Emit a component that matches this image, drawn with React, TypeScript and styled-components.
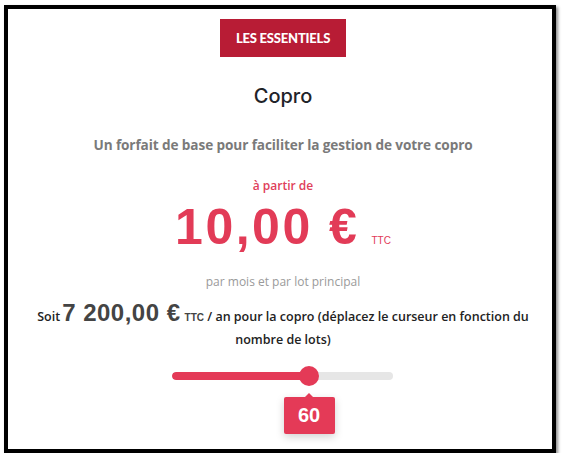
import React from "react";
import styled, { createGlobalStyle } from "styled-components";

const Global = createGlobalStyle`
  html, body { margin: 0; padding: 0; background: #fff; }
  body { font-family: "Open Sans", "Noto Sans", sans-serif; }
`;

const Frame = styled.div`
  box-sizing: border-box;
  margin: 5px 0 0 4px;
  width: 552px;
  height: 448px;
  border: 4px solid #000;
  box-shadow: 2px 2px 3px rgba(0, 0, 0, 0.45);
  display: flex;
  flex-direction: column;
  align-items: center;
  padding-top: 10px;
  padding-left: 6px;
`;

const Badge = styled.div`
  background: #b81c35;
  color: #fff;
  font-family: "Lato", sans-serif;
  font-weight: 900;
  font-size: 13px;
  letter-spacing: -0.2px;
  width: 126px;
  height: 38px;
  display: flex;
  align-items: center;
  justify-content: center;
`;

const Title = styled.h2`
  margin: 27px 0 0;
  font-family: "Inter", sans-serif;
  font-weight: 500;
  font-size: 20px;
  line-height: 24px;
  color: #1f2329;
`;

const Description = styled.p`
  margin: 27px 0 0;
  font-family: "Open Sans", sans-serif;
  font-weight: 700;
  font-size: 13.6px;
  line-height: 20px;
  color: #7a7a7a;
  letter-spacing: -0.1px;
`;

const From = styled.div`
  margin: 23px 0 0;
  font-family: "Open Sans", sans-serif;
  font-weight: 600;
  font-size: 12px;
  line-height: 16px;
  color: #e0405a;
`;

const PriceRow = styled.div`
  margin: 8px 0 0;
  display: flex;
  align-items: baseline;
  gap: 12px;
  color: #e23b57;
`;

const BigPrice = styled.span`
  font-family: "Liberation Sans", sans-serif;
  font-weight: 700;
  font-size: 50px;
  line-height: 50px;
  letter-spacing: 2.5px;
`;

const Tiny = styled.span<{ $color?: string }>`
  font-family: "Liberation Sans", sans-serif;
  font-size: 10px;
  color: ${(p) => p.$color || "inherit"};
`;

const PerLot = styled.div`
  margin: 22px 0 0;
  font-family: "Open Sans", sans-serif;
  font-weight: 400;
  font-size: 12px;
  line-height: 16px;
  color: #9a9a9a;
`;

const Total = styled.p`
  margin: 16px 0 0;
  width: 500px;
  text-align: center;
  font-family: "Open Sans", sans-serif;
  font-weight: 600;
  font-size: 12.5px;
  line-height: 22px;
  color: #222;
`;

const TotalAmount = styled.span`
  font-family: "Liberation Sans", sans-serif;
  font-weight: 700;
  font-size: 24px;
  line-height: 0;
  color: #444;
  letter-spacing: 0.5px;
  margin: 0 4px 0 2px;
`;

const SliderWrap = styled.div`
  position: relative;
  margin: 15px 0 0 -2px;
  width: 221px;
  height: 20px;
  display: flex;
  align-items: center;
`;

const Track = styled.div`
  width: 100%;
  height: 8px;
  border-radius: 4px;
  background: #e6e6e6;
  overflow: hidden;
`;

const Fill = styled.div`
  height: 100%;
  background: #e43a57;
  border-radius: 4px;
`;

const Thumb = styled.div`
  position: absolute;
  top: 0;
  width: 20px;
  height: 20px;
  margin-left: -10px;
  border-radius: 50%;
  background: #e43a57;
`;

const Tip = styled.div`
  position: absolute;
  top: 31px;
  width: 51px;
  height: 37px;
  margin-left: -25px;
  background: #e43a57;
  border-radius: 2px;
  color: #fff;
  font-family: "Liberation Sans", sans-serif;
  font-weight: 700;
  font-size: 20px;
  display: flex;
  align-items: center;
  justify-content: center;
  box-shadow: 0 3px 8px rgba(0, 0, 0, 0.18);
  &::before {
    content: "";
    position: absolute;
    top: -4px;
    left: 50%;
    margin-left: -4px;
    border-left: 4px solid transparent;
    border-right: 4px solid transparent;
    border-bottom: 4px solid #e43a57;
  }
`;

export default function App() {
  const pct = 62;
  return (
    <>
      <Global />
      <Frame>
        <Badge>LES ESSENTIELS</Badge>
        <Title>Copro</Title>
        <Description>Un forfait de base pour faciliter la gestion de votre copro</Description>
        <From>à partir de</From>
        <PriceRow>
          <BigPrice>10,00 €</BigPrice>
          <Tiny>TTC</Tiny>
        </PriceRow>
        <PerLot>par mois et par lot principal</PerLot>
        <Total>
          Soit<TotalAmount>7 200,00 €</TotalAmount>
          <Tiny $color="#444">TTC</Tiny> / an pour la copro (déplacez le curseur en fonction du nombre de lots)
        </Total>
        <SliderWrap>
          <Track>
            <Fill style={{ width: `${pct}%` }} />
          </Track>
          <Thumb style={{ left: `${pct}%` }} />
          <Tip style={{ left: `${pct}%` }}>60</Tip>
        </SliderWrap>
      </Frame>
    </>
  );
}
